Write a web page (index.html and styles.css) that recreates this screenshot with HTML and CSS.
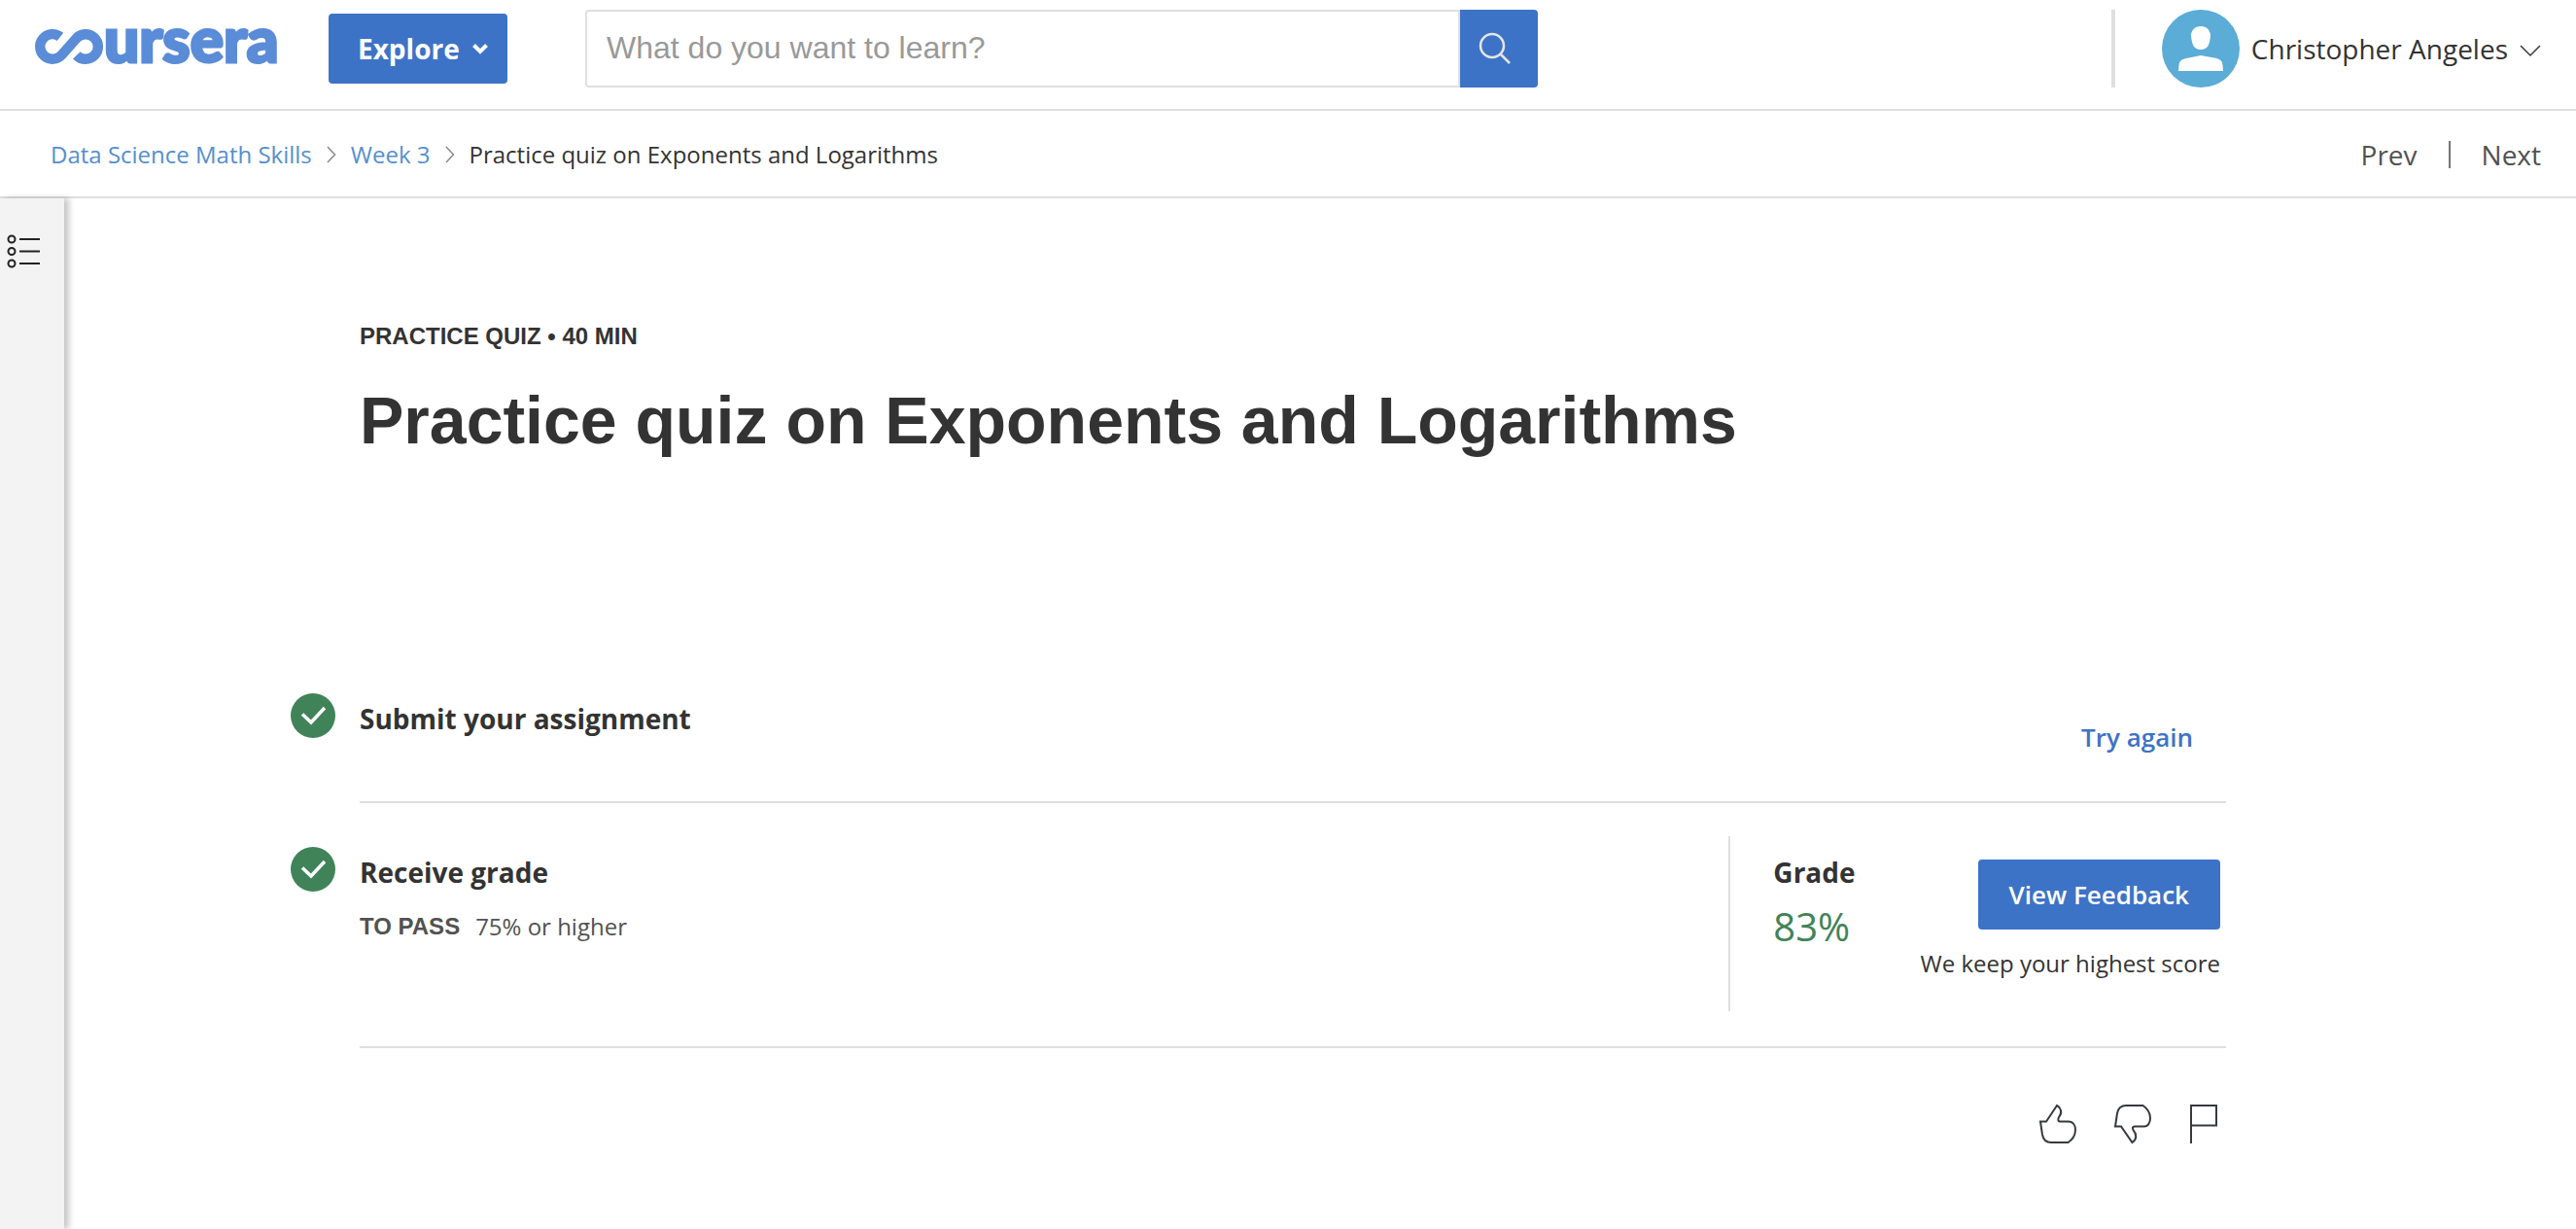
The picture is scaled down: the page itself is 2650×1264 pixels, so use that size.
FILE: index.html
```html
<!DOCTYPE html>
<html lang="en">
<head>
  <meta charset="utf-8">
  <meta name="viewport" content="width=device-width, initial-scale=1">
  <title>Practice quiz on Exponents and Logarithms | Coursera</title>
  <link rel="stylesheet" href="styles.css">
</head>
<body>
  <header class="topbar">
    <a class="logo" href="#" aria-label="Coursera home">
      <svg width="256" height="80" viewBox="0 0 256 80" aria-hidden="true">
        <path class="logo-mark" d="M26 27.900A12.800 12.800 0 1 0 27.600 46.400L42.400 29.600A12.800 12.800 0 1 1 42.800 46.800"/>
        <text class="logo-text" x="71" y="54">ursera</text>
      </svg>
    </a>
    <button class="button explore" type="button">
      Explore
      <svg width="16" height="12" viewBox="0 0 16 12" aria-hidden="true"><path d="M1.500 2.500 8 9 14.500 2.500"/></svg>
    </button>
    <form class="search" role="search">
      <input class="search-input" type="text" aria-label="Search" placeholder="What do you want to learn?">
      <button class="search-button" type="button" aria-label="Submit search">
        <svg width="34" height="34" viewBox="0 0 34 34" aria-hidden="true"><circle cx="14" cy="14" r="12"/><path d="M22.500 22.500 32 32"/></svg>
      </button>
    </form>
    <div class="account">
      <a class="profile" href="#">
        <svg width="80" height="80" viewBox="0 0 80 80" aria-hidden="true">
          <circle cx="40" cy="40" r="40" fill="#5bacd7"/>
          <path fill="#fff" d="M40 17C46 17 50 21 50 27C49 36 47 41 40 41C33 41 31 36 30 27C30 21 34 17 40 17ZM40 47 54 49.500C61 51 62 53 62.500 57L63 63H17L17.500 57C18 53 20 51 25 50Z"/>
        </svg>
        <span>Christopher Angeles</span>
        <svg class="caret" width="22" height="18" viewBox="0 0 22 18" aria-hidden="true"><path d="M1 6 11 16 21 6"/></svg>
      </a>
    </div>
  </header>

  <div class="subbar">
    <nav class="breadcrumbs" aria-label="Breadcrumb">
      <a href="#">Data Science Math Skills</a>
      <svg width="10" height="18" viewBox="0 0 10 18" aria-hidden="true"><path d="M1 1 8.500 9 1 17"/></svg>
      <a href="#">Week 3</a>
      <svg width="10" height="18" viewBox="0 0 10 18" aria-hidden="true"><path d="M1 1 8.500 9 1 17"/></svg>
      <span>Practice quiz on Exponents and Logarithms</span>
    </nav>
    <nav class="pager" aria-label="Course items">
      <a href="#">Prev</a>
      <span class="pager-rule"></span>
      <a href="#">Next</a>
    </nav>
  </div>

  <div class="layout">
    <aside class="rail">
      <button class="rail-button" type="button" aria-label="Show course outline">
        <svg width="36" height="36" viewBox="0 0 36 36" aria-hidden="true">
          <circle cx="5" cy="6" r="3.500"/><circle cx="5" cy="18.500" r="3.500"/><circle cx="5" cy="31" r="3.500"/>
          <path d="M13 6H34M13 18.500H34M13 31H34"/>
        </svg>
      </button>
    </aside>
    <main class="content">
      <p class="eyebrow">PRACTICE QUIZ • 40 MIN</p>
      <h1 class="title">Practice quiz on Exponents and Logarithms</h1>

      <section class="step">
        <svg class="check" width="46" height="46" viewBox="0 0 46 46" aria-hidden="true"><circle cx="23" cy="23" r="23"/><path d="M12 21.500 21 30 35 15"/></svg>
        <div class="step-body">
          <h2 class="step-title">Submit your assignment</h2>
          <button class="button try-again" type="button">Try again</button>
        </div>
      </section>

      <section class="step">
        <svg class="check" width="46" height="46" viewBox="0 0 46 46" aria-hidden="true"><circle cx="23" cy="23" r="23"/><path d="M12 21.500 21 30 35 15"/></svg>
        <div class="step-body">
          <div>
            <h2 class="step-title">Receive grade</h2>
            <p class="requirement"><strong>TO PASS</strong><span>75% or higher</span></p>
          </div>
          <div class="result">
            <div>
              <h2 class="grade-title">Grade</h2>
              <p class="grade">83%</p>
            </div>
            <div class="result-actions">
              <button class="button feedback" type="button">View Feedback</button>
              <p class="note">We keep your highest score</p>
            </div>
          </div>
        </div>
      </section>

      <div class="reactions">
        <button type="button" aria-label="Like">
          <svg width="38" height="42" viewBox="0 0 38 42" aria-hidden="true"><path d="M1 18.500H7L18 2C22 4 24 9 20 14C19 16 19 18.500 21 18.500H30C35 18.500 37 23 37 27C37 32 34 37 29.500 40H12C7 40 4 37 3 32Z"/></svg>
        </button>
        <button type="button" aria-label="Dislike">
          <svg width="38" height="42" viewBox="0 0 38 42" aria-hidden="true"><path d="M1 23.500H7L18.500 40C23 37 23.500 32 20 28C18 25 19 23.500 21 23.500H31C35 23.500 37 19 37 15C37 10 34 5 29.500 2H12C7 2 4 5 3 10Z"/></svg>
        </button>
        <button type="button" aria-label="Report an issue">
          <svg width="30" height="42" viewBox="0 0 30 42" aria-hidden="true"><path d="M2 41V2H28V22.500H2"/></svg>
        </button>
      </div>
    </main>
  </div>
</body>
</html>
```

FILE: styles.css
```css
* {
  box-sizing: border-box;
}

body {
  margin: 0;
  min-height: 100vh;
  display: flex;
  flex-direction: column;
  background: #fff;
  color: #333;
  font-family: "Open Sans", "Noto Sans", sans-serif;
  font-size: 24px;
  line-height: 32px;
}

h1, h2, p {
  margin: 0;
}

a {
  color: inherit;
  text-decoration: none;
}

button {
  border: 0;
  padding: 0;
  background: none;
  font: inherit;
  cursor: pointer;
}

svg {
  display: block;
  flex: none;
  fill: none;
  overflow: visible;
}

.button {
  height: 72px;
  border-radius: 4px;
  font-size: 26px;
  font-weight: 600;
  line-height: 36px;
  white-space: nowrap;
}

/* Top bar */

.topbar {
  display: flex;
  align-items: center;
  padding: 10px 36px 22px;
  border-bottom: 2px solid #dfdfdf;
}

.logo {
  margin-right: 46px;
}

.logo-mark {
  stroke: #5a8cd8;
  stroke-width: 10.4;
}

.logo-text {
  fill: #5a8cd8;
  stroke: #5a8cd8;
  stroke-width: 3;
  font-family: Lato, sans-serif;
  font-size: 64px;
  font-weight: 900;
}

.explore {
  display: flex;
  align-items: center;
  justify-content: space-between;
  width: 184px;
  padding: 0 20px 0 30px;
  background: #3d73c6;
  color: #fff;
  font-size: 28px;
  font-weight: 700;
}

.explore svg {
  stroke: #fff;
  stroke-width: 4;
}

.search {
  display: flex;
  flex: 0 1 980px;
  height: 80px;
  margin-left: 80px;
}

.search-input {
  flex: 1;
  min-width: 0;
  padding: 0 20px 2px;
  border: 2px solid #dfdfdf;
  border-radius: 4px 0 0 4px;
  background: #fff;
  color: #333;
  font-family: "Liberation Sans", Arial, sans-serif;
  font-size: 32px;
}

.search-input::placeholder {
  color: #999;
  opacity: 1;
}

.search-button {
  display: grid;
  place-items: center;
  width: 80px;
  border-radius: 0 4px 4px 0;
  background: #3d73c6;
}

.search-button svg {
  stroke: #e5e5e5;
  stroke-width: 2.5;
  margin-right: 8px;
}

.account {
  margin-left: auto;
  padding-left: 48px;
  border-left: 4px solid #dfdfdf;
}

.profile {
  display: flex;
  align-items: center;
  gap: 12px;
  font-size: 28px;
  white-space: nowrap;
}

.caret {
  stroke: #373a3c;
  stroke-width: 1.5;
}

/* Breadcrumb bar */

.subbar {
  display: flex;
  align-items: center;
  justify-content: space-between;
  height: 90px;
  padding: 2px 36px 0 52px;
  border-bottom: 2px solid #dfdfdf;
}

.breadcrumbs {
  display: flex;
  align-items: center;
  gap: 15px;
}

.breadcrumbs a {
  color: #558fcd;
}

.breadcrumbs svg {
  stroke: #8a8a8a;
  stroke-width: 1.5;
}

.pager {
  display: flex;
  align-items: center;
  gap: 32px;
  color: #525252;
  font-size: 28px;
}

.pager-rule {
  width: 2px;
  height: 28px;
  background: #757575;
}

/* Page body */

.layout {
  display: flex;
  flex: 1;
}

.rail {
  width: 66px;
  padding: 36px 0 0 7px;
  background: #f3f3f3;
  box-shadow: 5px 0 6px rgba(0, 0, 0, 0.22);
}

.rail svg {
  stroke: #222;
  stroke-width: 2;
}

.content {
  flex: 1;
  padding: 126px 360px 80px 304px;
}

.eyebrow {
  font-family: "Liberation Sans", Arial, sans-serif;
  font-weight: 700;
}

.title {
  margin-top: 26px;
  margin-bottom: 192px;
  font-family: "Liberation Sans", Arial, sans-serif;
  font-size: 68px;
  font-weight: 700;
  line-height: 88px;
}

/* Assignment steps */

.step {
  display: grid;
  grid-template-columns: 46px 1fr;
  column-gap: 25px;
  margin-left: -71px;
}

.check {
  margin-top: 45px;
}

.check circle {
  fill: #418358;
}

.check path {
  stroke: #fff;
  stroke-width: 3.5;
}

.step-body {
  display: flex;
  justify-content: space-between;
  border-bottom: 2px solid #dfdfdf;
}

.step-title {
  margin-top: 51px;
  font-size: 28px;
  line-height: 40px;
}

.try-again {
  margin: 54px 0 30px;
  padding: 0 34px;
  color: #3d73c6;
}

.requirement {
  display: flex;
  gap: 16px;
  margin-top: 20px;
  color: #525252;
}

.requirement strong {
  font-family: "Liberation Sans", Arial, sans-serif;
}

.result {
  display: flex;
  gap: 67px;
  min-height: 180px;
  margin: 34px 0 36px;
  padding-right: 6px;
  padding-left: 44px;
  border-left: 2px solid #dfdfdf;
}

.grade-title {
  margin-top: 17px;
  font-size: 28px;
  line-height: 40px;
}

.grade {
  margin-top: 8px;
  color: #418358;
  font-size: 40px;
  line-height: 56px;
}

.result-actions {
  display: flex;
  flex-direction: column;
  align-items: flex-end;
  gap: 19px;
  padding-top: 24px;
}

.feedback {
  padding: 0 32px;
  background: #3d73c6;
  color: #fff;
}

/* Reactions */

.reactions {
  display: flex;
  justify-content: flex-end;
  gap: 39px;
  margin-top: 57px;
  padding-right: 8px;
}

.reactions svg {
  stroke: #373a3c;
  stroke-width: 2;
}
```
